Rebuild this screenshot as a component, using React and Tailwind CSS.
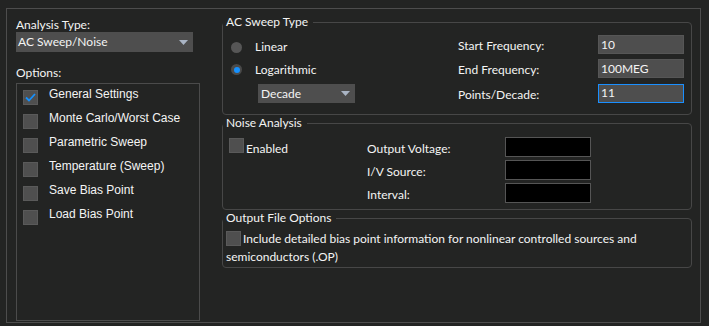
import React from "react";

const seg = { fontFamily: "Lato, 'Noto Sans', sans-serif" };
const ari = { fontFamily: "'Liberation Sans', Arial, sans-serif" };

function Box({ checked, className = "" }) {
  return (
    <span
      className={
        "inline-flex items-center justify-center w-[15px] h-[15px] bg-[#4f4f4f] border border-[#5a5a5a] shrink-0 " +
        className
      }
    >
      {checked && (
        <svg width="11" height="9" viewBox="0 0 11 9">
          <path d="M1 4.5 L4 7.5 L10 1" fill="none" stroke="#1591ff" strokeWidth="1.8" />
        </svg>
      )}
    </span>
  );
}

function Arrow() {
  return (
    <svg width="9" height="5" viewBox="0 0 9 5" className="shrink-0">
      <path d="M0 0 L9 0 L4.5 5 Z" fill="#a9b4c4" />
    </svg>
  );
}

function Group({ title, className = "", children }) {
  return (
    <fieldset className={"border border-[#474747] rounded-[4px] " + className}>
      <legend className="ml-[0px] pl-[3px] pr-[5px] text-[12px] leading-[16px] text-[#f4f4f4]" style={seg}>
        {title}
      </legend>
      {children}
    </fieldset>
  );
}

export default function App() {
  const options = [
    ["General Settings", true],
    ["Monte Carlo/Worst Case", false],
    ["Parametric Sweep", false],
    ["Temperature (Sweep)", false],
    ["Save Bias Point", false],
    ["Load Bias Point", false],
  ];
  return (
    <div className="w-[709px] h-[326px] bg-[#232423] pt-[8px] pl-[6px] text-[#f4f4f4] text-[12px]" style={seg}>
      <div className="w-[695px] h-[315px] border border-[#4d4d4d] flex">
        {/* left */}
        <div className="pl-[9px] pt-[9px] w-[206px] flex flex-col">
          <div className="leading-[14px] h-[14px]">Analysis Type:</div>
          <div className="w-[177px] h-[20px] bg-[#4e4e4e] flex items-center justify-between pl-[2px] pr-[5px]">
            <span className="leading-[16px]">AC Sweep/Noise</span>
            <Arrow />
          </div>
          <div className="mt-[13px] leading-[16px] h-[16px]">Options:</div>
          <div className="mt-[2px] w-[184px] h-[238px] border border-[#4b4b4b] pt-[6px] pl-[6px] flex flex-col gap-[9px]" style={ari}>
            {options.map(([t, c]) => (
              <div key={t} className="flex items-center h-[15px]">
                <Box checked={c} />
                <span className="ml-[11px] leading-[15px] -mt-[7px]">{t}</span>
              </div>
            ))}
          </div>
        </div>
        {/* right */}
        <div className="flex-1 pr-[8px] pt-[5px] pl-[9px] flex flex-col">
          <Group title="AC Sweep Type">
            <div className="flex pt-[5px] pb-[11px]">
              <div className="w-[235px] pl-[8px] flex flex-col">
                <div className="flex items-center h-[23px] pt-[1px]">
                  <span className="w-[11px] h-[11px] rounded-full bg-[#565656]" />
                  <span className="ml-[13px]">Linear</span>
                </div>
                <div className="flex items-center h-[23px]">
                  <span className="w-[11px] h-[11px] rounded-full bg-[#4a4a4a] flex items-center justify-center">
                    <span className="w-[6px] h-[6px] rounded-full bg-[#1591ff]" />
                  </span>
                  <span className="ml-[13px]">Logarithmic</span>
                </div>
                <div className="ml-[27px] mt-[3px] w-[97px] h-[19px] bg-[#4e4e4e] flex items-center justify-between pl-[3px] pr-[5px]">
                  <span>Decade</span>
                  <Arrow />
                </div>
              </div>
              <div className="grid grid-cols-[140px_86px] gap-y-[5px]">
                {[
                  ["Start Frequency:", "10", false],
                  ["End Frequency:", "100MEG", false],
                  ["Points/Decade:", "11", true],
                ].map(([l, v, f]) => (
                  <React.Fragment key={l}>
                    <div className="h-[19px] flex items-center pt-[3px]">{l}</div>
                    <div
                      className={
                        "h-[19px] bg-[#4e4e4e] border flex items-center pl-[2px] " +
                        (f ? "border-[#1a8fff]" : "border-[#565656]")
                      }
                    >
                      {v}
                    </div>
                  </React.Fragment>
                ))}
              </div>
            </div>
          </Group>
          <Group title="Noise Analysis">
            <div className="flex pt-[6px] pb-[6px]">
              <div className="w-[144px] pl-[6px] flex items-start">
                <Box className="mt-[1px]" />
                <span className="ml-[2px] leading-[18px] pt-[3px]">Enabled</span>
              </div>
              <div className="grid grid-cols-[138px_86px] gap-y-[3px]">
                {["Output Voltage:", "I/V Source:", "Interval:"].map((l) => (
                  <React.Fragment key={l}>
                    <div className="h-[20px] flex items-center pt-[4px]">{l}</div>
                    <div className="h-[20px] bg-black border border-[#555555]" />
                  </React.Fragment>
                ))}
              </div>
            </div>
          </Group>
          <Group title="Output File Options">
            <div className="pl-[3px] pt-[4px] pb-[1px] pr-[10px] leading-[18px]">
              <Box className="align-[-3px] mr-[2px]" />
              Include detailed bias point information for nonlinear controlled sources and semiconductors (.OP)
            </div>
          </Group>
        </div>
      </div>
    </div>
  );
}
